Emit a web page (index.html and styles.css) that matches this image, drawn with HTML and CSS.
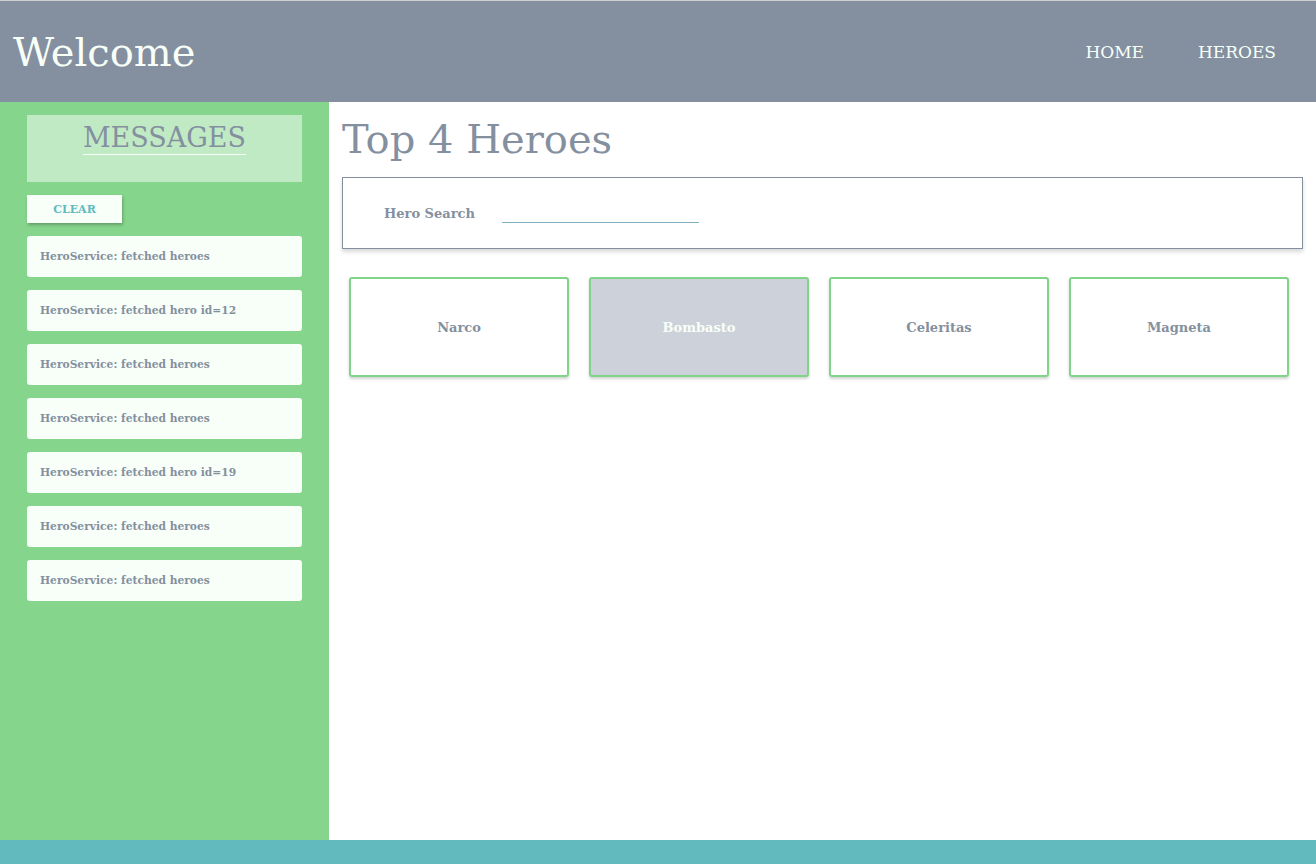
FILE: index.html
```html
<!DOCTYPE html>
<html lang="en">
<head>
    <meta charset="UTF-8">
    <title>Tour of Heroes</title>
    <link rel="stylesheet" href="styles.css">
</head>
<body>
    <div class="header">
        <h1 class="title">Welcome</h1>
        <nav class="nav">
            <a href="#">HOME</a>
            <a href="#">HEROES</a>
        </nav>
    </div>

    <div class="page">
        <div class="sidebar">
            <div class="messages-head">
                <h2><span>MESSAGES</span></h2>
            </div>
            <button class="clear-button">CLEAR</button>
            <div class="message">HeroService: fetched heroes</div>
            <div class="message">HeroService: fetched hero id=12</div>
            <div class="message">HeroService: fetched heroes</div>
            <div class="message">HeroService: fetched heroes</div>
            <div class="message">HeroService: fetched hero id=19</div>
            <div class="message">HeroService: fetched heroes</div>
            <div class="message">HeroService: fetched heroes</div>
        </div>

        <div class="main">
            <h2 class="dashboard-title">Top 4 Heroes</h2>
            <div class="search-box">
                <label for="search">Hero Search</label>
                <input type="text" id="search">
            </div>
            <div class="heroes">
                <a class="hero" href="#">Narco</a>
                <a class="hero selected" href="#">Bombasto</a>
                <a class="hero" href="#">Celeritas</a>
                <a class="hero" href="#">Magneta</a>
            </div>
        </div>
    </div>

    <div class="footer"></div>
</body>
</html>
```
FILE: styles.css
```css
body {
    font-family: 'DejaVu Serif', serif;
    margin: 0;
    min-height: 100vh;
    display: flex;
    flex-direction: column;
    background-color: white;
    color: #8490a0;
}
.header {
    height: 101px;
    border-top: 1px solid #cfcfcf;
    background-color: #8490a0;
    color: #f8fff8;
    display: flex;
    align-items: center;
    justify-content: space-between;
    padding: 0 13px;
}
.title {
    margin: 0;
    font-size: 40px;
    font-weight: normal;
}
.nav {
    display: flex;
}
.nav a {
    color: #f8fff8;
    text-decoration: none;
    font-size: 17px;
    padding: 0 27px;
}
.page {
    flex: 1;
    display: flex;
}
.sidebar {
    width: 275px;
    background-color: #86d58c;
    padding: 13px 27px;
}
.messages-head {
    background-color: #c0eac3;
    height: 67px;
    text-align: center;
}
.messages-head h2 {
    margin: 0;
    padding-top: 7px;
    font-size: 27px;
    font-weight: normal;
}
.messages-head span {
    border-bottom: 1px solid #f8fff8;
    padding-bottom: 1px;
}
.clear-button {
    font-family: 'DejaVu Serif', serif;
    font-weight: bold;
    font-size: 11px;
    color: #62babf;
    background-color: #f8fff8;
    border: none;
    width: 95px;
    height: 28px;
    margin: 13px 0;
    box-shadow: 1px 2px 3px rgba(0,0,0,0.25);
    cursor: pointer;
}
.message {
    background-color: #f8fff8;
    border-radius: 3px;
    height: 41px;
    padding: 0 13px;
    display: flex;
    align-items: center;
    font-size: 10.7px;
    font-weight: bold;
    margin-bottom: 13px;
}
.main {
    flex: 1;
    padding: 0 13px;
}
.dashboard-title {
    margin: 14px 0 15px;
    font-size: 40px;
    font-weight: normal;
}
.search-box {
    border: 1px solid #8490a0;
    height: 70px;
    display: flex;
    align-items: center;
    padding-left: 41px;
    box-shadow: 0 3px 4px rgba(0,0,0,0.15);
}
.search-box label {
    font-size: 13px;
    font-weight: bold;
    margin-right: 27px;
}
.search-box input {
    width: 197px;
    border: none;
    border-bottom: 1px solid #7fafc0;
    outline: none;
    margin-top: 4px;
    padding: 0;
    height: 14px;
}
.heroes {
    display: flex;
    gap: 20px;
    padding: 28px 7px;
}
.hero {
    width: 216px;
    height: 96px;
    border: 2px solid #80d487;
    border-radius: 3px;
    box-shadow: 0 2px 3px rgba(0,0,0,0.18);
    display: flex;
    align-items: center;
    justify-content: center;
    font-size: 13px;
    font-weight: bold;
    color: #8490a0;
    text-decoration: none;
}
.hero.selected {
    background-color: #cdd2da;
    color: #f8fff8;
}
.footer {
    height: 24px;
    background-color: #62babf;
}
```
